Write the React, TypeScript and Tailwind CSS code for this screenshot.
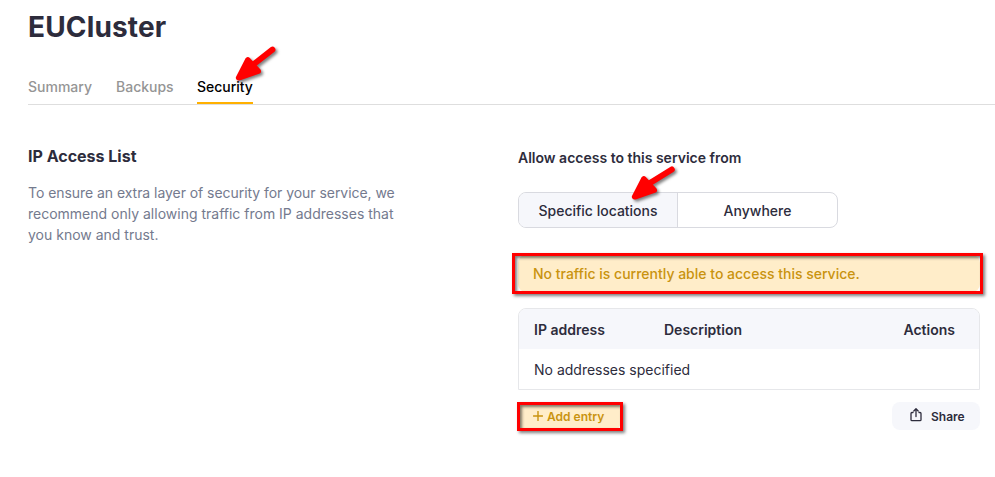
import React from 'react';

function Arrow({ className, shaft }: { className: string; shaft: string }) {
  return (
    <svg
      viewBox="0 0 50 44"
      className={`pointer-events-none absolute h-[44px] w-[50px] drop-shadow-[2px_2px_1.5px_rgba(0,0,0,0.5)] ${className}`}
      fill="red"
      stroke="red"
      strokeLinecap="round"
      strokeLinejoin="round"
    >
      <path d={shaft} strokeWidth="6" />
      <path d="M17.8 16 8.700 33.800 28.200 27.200Z" strokeWidth="5.6" />
    </svg>
  );
}

const highlight =
  'pointer-events-none absolute border-[3px] border-[#ff0000] shadow-[2px_2px_3px_rgba(0,0,0,0.5),inset_2px_2px_3px_rgba(0,0,0,0.5)]';

export default function App() {
  return (
    <div className="h-[477px] w-[995px] overflow-hidden bg-white pl-7 font-['Inter',sans-serif] text-sm text-[#2d2c3c]">
      <h1 className="h-[68px] pt-[9px] text-[28px] leading-9 font-bold tracking-[0.15px]">EUCluster</h1>
      <nav className="flex h-[37px] border-b border-[#dedede] font-medium text-[#959595]">
        <span className="mr-6 h-9 leading-[38px]">Summary</span>
        <span className="mr-[23.4px] h-9 leading-[38px]">Backups</span>
        <span className="relative h-9 border-b-2 border-[#ffb000] leading-[38px] tracking-[-0.02px] text-black">
          Security
          <Arrow className="top-[-24px] left-[33px]" shaft="M42.4 5.600 24 20" />
        </span>
      </nav>
      <main className="flex pr-[15px]">
        <section className="w-[490px] pt-[39px]">
          <h2 className="text-base leading-6 font-bold">IP Access List</h2>
          <p className="mt-[14px] w-[380px] leading-[21px] text-[#747a8e] first-line:tracking-[-0.05px]">
            To ensure an extra layer of security for your service, we recommend only allowing traffic from IP addresses that you know and trust.
          </p>
        </section>
        <section className="w-[462px] pt-[43px]">
          <h3 className="leading-5 font-semibold">Allow access to this service from</h3>
          <div className="relative mt-6 flex h-9 w-80 rounded-lg border border-[#d9dae0] text-center leading-[36px] font-medium">
            <div className="w-[159px] rounded-l-[7px] border-r border-[#d9dae0] bg-[#f6f7fb]">Specific locations</div>
            <div className="flex-1">Anywhere</div>
            <Arrow className="top-[-30px] left-[107px]" shaft="M45.800 6.500 24 20" />
          </div>
          <div className="relative mt-[27px] h-[37px] rounded-lg bg-[#ffedc9] pl-[15px] leading-[38px] font-medium text-[#c9930f]">
            No traffic is currently able to access this service.
            <div className={`${highlight} -top-[2px] -right-[3px] -left-[6px] h-[41px]`} />
          </div>
          <div className="mt-4 h-[82px] overflow-hidden rounded-t-lg border border-[#e6e7ea]">
            <div className="flex h-10 bg-[#f6f7fb] px-[15px] leading-[42px] font-semibold">
              <span className="w-[130px]">IP address</span>
              <span className="flex-1">Description</span>
              <span className="w-[61px] pr-[9px] text-right">Actions</span>
            </div>
            <div className="px-[15px] leading-[41px]">No addresses specified</div>
          </div>
          <div className="mt-3 flex justify-between text-xs font-semibold">
            <button className="relative flex h-7 w-[103px] items-center rounded-lg bg-[#ffedc9] pl-[15px] text-[#c9930f]">
              <svg className="mr-1 h-[10px] w-[10px]" viewBox="0 0 10 10" stroke="currentColor" strokeWidth="1.4" strokeLinecap="round">
                <path d="M5 .5v9M.5 5h9" />
              </svg>
              <span className="pt-[2px]">Add entry</span>
              <span className={`${highlight} top-0 -left-px h-[29px] w-[106px]`} />
            </button>
            <button className="flex h-7 w-[88px] items-center rounded-lg bg-[#f6f7fb] pl-[18px]">
              <svg className="mr-[9px] h-[14px] w-3 -translate-y-px" viewBox="0 0 12 14" fill="none" stroke="currentColor" strokeWidth="1.3" strokeLinecap="round" strokeLinejoin="round">
                <path d="M3 4.5H2q-1 0-1 1v6.200q0 1 1 1h8q1 0 1-1V5.500q0-1-1-1H9M6 8.500V1M3.800 3 6 .8 8.200 3" />
              </svg>
              <span className="pt-[2px]">Share</span>
            </button>
          </div>
        </section>
      </main>
    </div>
  );
}
